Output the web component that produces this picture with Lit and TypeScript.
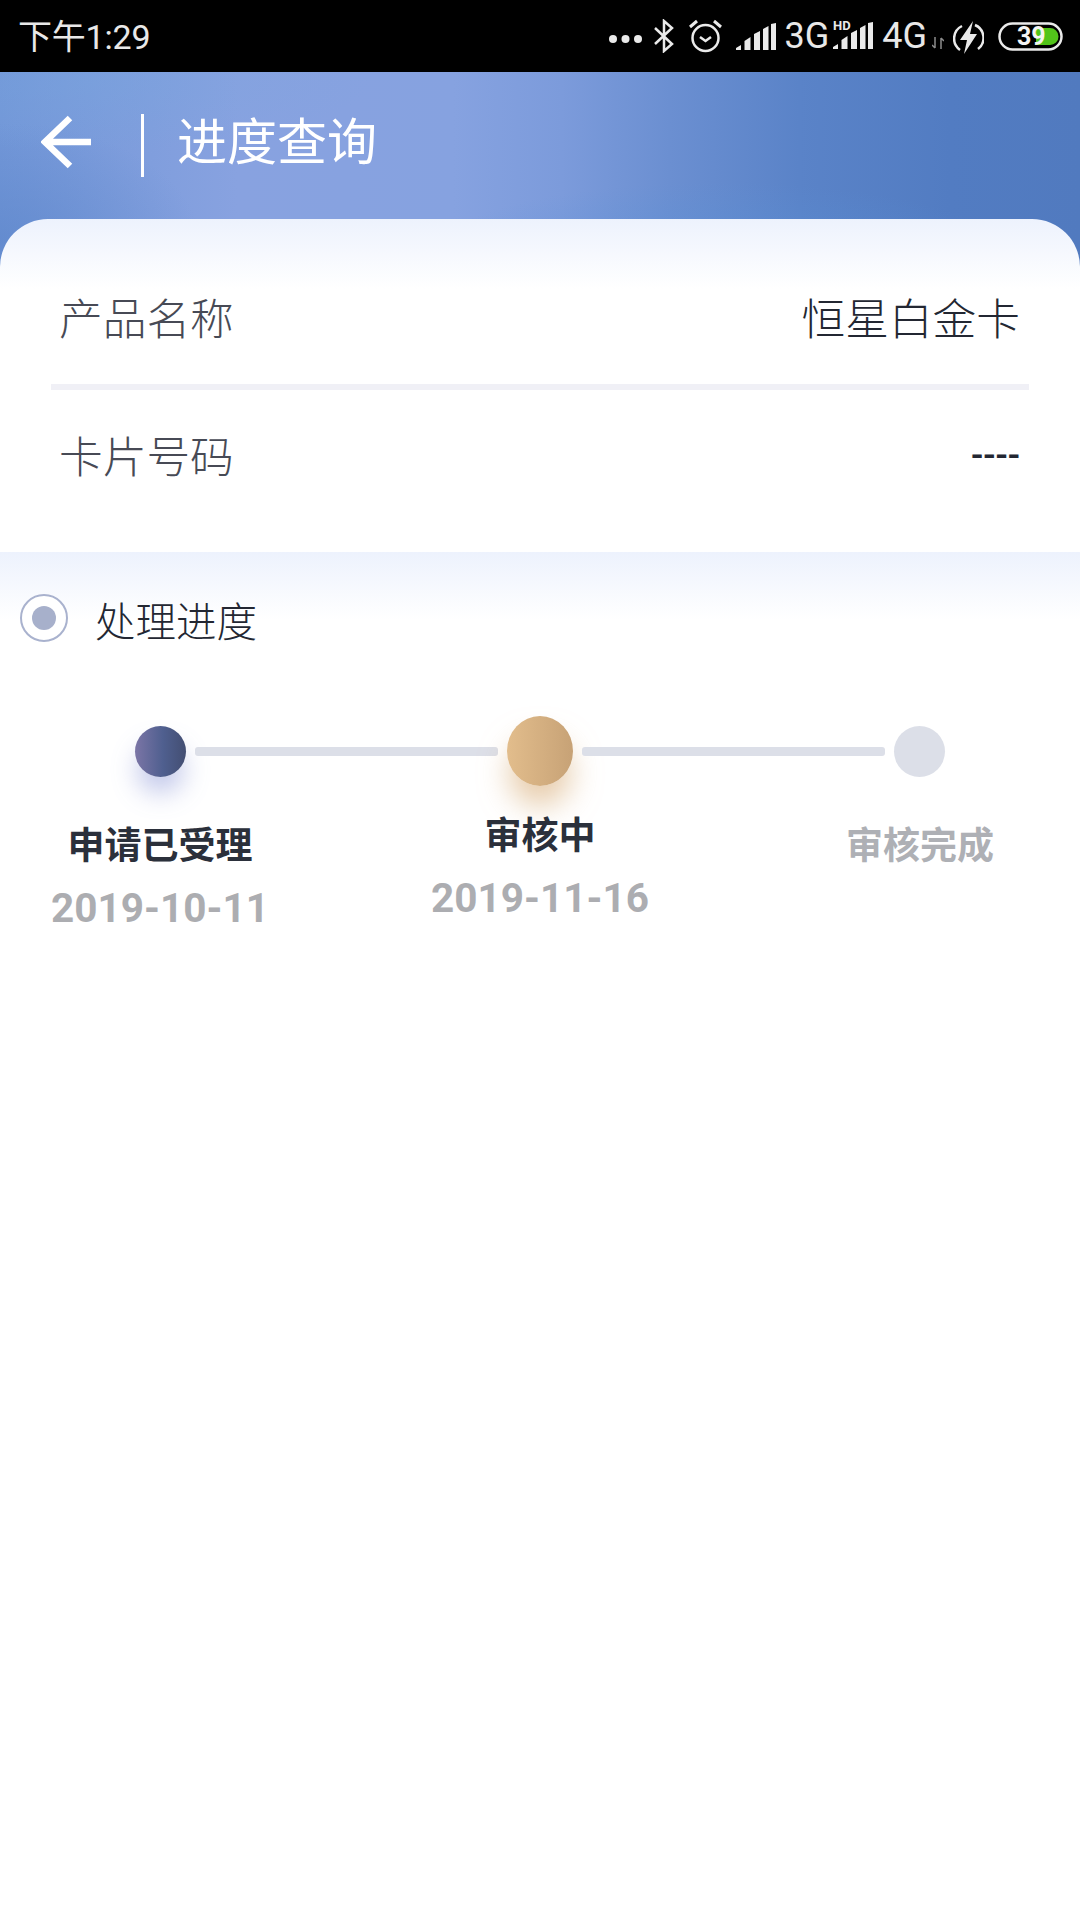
import { LitElement, html, css, svg } from "lit";
import { customElement } from "lit/decorators.js";

const bars = () => svg`
  <path d="M0 27h5v-5l-5 3z M8.500 27h6V14l-6 4z M18 27h6V8l-6 3z M27 27h5.500V3L27 6z M35 27h5V0l-5 1z" fill="#eaeaea"/>`;

@customElement("app-root")
export class AppRoot extends LitElement {
  static styles = css`
    :host {
      display: block;
      width: 1080px;
      height: 1920px;
      background: #fff;
      overflow: hidden;
      font-family: "Noto Sans CJK SC", "Noto Sans", sans-serif;
    }
    .status {
      height: 72px;
      background: #000;
      display: flex;
      align-items: center;
      color: #e8e8e8;
      font-family: Roboto, "Noto Sans CJK SC", sans-serif;
      padding: 0 17px 0 18px;
      box-sizing: border-box;
    }
    .time { font-size: 34px; line-height: 70px; flex: 1; padding-top: 2px; letter-spacing: -0.2px; }
    .icons { display: flex; align-items: center; height: 72px; }
    .net { font-size: 36px; line-height: 72px; }
    .dots { margin-right: 12px; margin-top: 6px; }
    .bt { margin-right: 15px; }
    .alarm { margin-right: 14px; }
    .sig1 { margin-right: 8px; }
    .sig2 { margin: -4px 9px 0 4px; }
    .arrows { margin: 14px 9px 0 5px; }
    .bolt { margin-right: 14px; margin-top: 2px; }
    .header {
      height: 195px;
      padding-bottom: 48px;
      box-sizing: border-box;
      display: flex;
      align-items: center;
      padding-left: 41px;
      background:
        radial-gradient(ellipse 280px 70px at 90px 10px, rgba(120, 165, 222, 0.4), transparent),
        radial-gradient(ellipse 200px 120px at 0px 170px, rgba(88, 130, 200, 0.55), transparent),
        radial-gradient(ellipse 300px 80px at 720px 190px, rgba(90, 145, 215, 0.5), transparent),
        linear-gradient(90deg, #7297d8 0%, #88a2e0 22%, #86a2e0 42%, #7c9bdb 52%, #6b8fd1 62%, #5a83c8 74%, #527cc2 88%, #517abf 100%);
      color: #fff;
    }
    .back { display: block; margin-right: 50px; margin-top: -8px; }
    .sep { width: 3px; height: 63px; background: #fff; margin-right: 33px; }
    .title { font-size: 50px; line-height: 70px; font-weight: 400; padding-bottom: 16px; }
    .card {
      position: relative;
      margin-top: -48px;
      border-radius: 48px 48px 0 0;
      background: linear-gradient(180deg, #edf2fd 0, #fff 70px);
      padding: 69px 0 66px;
    }
    .row {
      display: flex;
      justify-content: space-between;
      align-items: center;
      height: 60px;
      font-size: 43.7px;
      padding: 0 60px 0 59px;
      font-weight: 300;
    }
    .row span { padding-bottom: 5px; }
    .row .k { color: #474a55; }
    .row .v { color: #232732; }
    .row .dash { font-family: Roboto, sans-serif; font-weight: 500; font-size: 36px; padding-bottom: 0; }
    .rule { height: 6px; background: #f0f0f6; margin: 36px 51px 36px 51px; }
    .progress {
      background: linear-gradient(180deg, #edf2fd 0, #fff 68px);
      padding-top: 42px;
    }
    .head { display: flex; align-items: center; height: 48px; padding-left: 20px; }
    .radio {
      width: 48px;
      height: 48px;
      box-sizing: border-box;
      border: 2px solid #a9b2ce;
      border-radius: 50%;
      display: flex;
      align-items: center;
      justify-content: center;
      margin-right: 27px;
      background: #fff;
    }
    .radio i { display: block; width: 24px; height: 24px; border-radius: 50%; background: #a7b0cb; }
    .head span { font-size: 40.5px; line-height: 48px; color: #232732; font-weight: 300; padding-top: 4px; }
    .track {
      display: flex;
      align-items: center;
      justify-content: center;
      gap: 9px;
      margin-top: 74px;
      height: 70px;
    }
    .node { width: 51px; height: 51px; border-radius: 50%; flex: none; }
    .node.done {
      background: linear-gradient(90deg, #7b75a6, #4f5f8f 55%, #434e72);
      box-shadow: 0 18px 26px -2px rgba(110, 125, 205, 0.42);
    }
    .node.now {
      width: 66px;
      height: 70px;
      background: linear-gradient(90deg, #e2bd8c, #c7a276);
      box-shadow: 0 22px 30px -2px rgba(215, 170, 115, 0.6);
    }
    .node.todo { background: #dcdfe8; }
    .line { width: 303px; height: 9px; border-radius: 3px; background: #dcdfe8; flex: none; }
    .steps {
      display: grid;
      grid-template-columns: repeat(3, 320px);
      column-gap: 60px;
      align-items: start;
    }
    .step { text-align: center; margin-top: 32px; }
    .step.now { margin-top: 22px; }
    .name { font-size: 37px; line-height: 50px; font-weight: 700; color: #2b303b; }
    .step.todo .name { color: #aeb0b5; }
    .date {
      font-family: Roboto, sans-serif;
      font-weight: 700;
      font-size: 40.5px;
      line-height: 50px;
      margin-top: 15px;
      color: #acadb1;
    }
  `;

  render() {
    return html`
      <div class="status">
        <div class="time">下午1:29</div>
        <div class="icons">
          <svg class="dots" width="33" height="10" viewBox="0 0 33 10"><circle cx="4" cy="5" r="4" fill="#eaeaea"/><circle cx="16.500" cy="5" r="4" fill="#eaeaea"/><circle cx="29" cy="5" r="4" fill="#eaeaea"/></svg>
          <svg class="bt" width="20" height="34" viewBox="0 0 20 34" fill="none" stroke="#eaeaea" stroke-width="2.500"><path d="M1 9l17 16-8 7V2l8 7L1 25"/></svg>
          <svg class="alarm" width="33" height="34" viewBox="0 0 33 34" fill="none" stroke="#eaeaea" stroke-width="2.500"><circle cx="16.500" cy="19" r="13"/><path d="M11 18l5.500 4 5.500-4"/><path d="M1 8l7-6M32 8l-7-6" stroke-width="3"/></svg>
          <svg class="sig1" width="40" height="27" viewBox="0 0 40 27">${bars()}</svg>
          <span class="net">3G</span>
          <svg class="sig2" width="40" height="32" viewBox="0 0 40 32"><text x="0" y="12" font-family="Roboto, sans-serif" font-size="13" font-weight="700" fill="#eaeaea">HD</text><g transform="translate(0 4)">${bars()}</g></svg>
          <span class="net">4G</span>
          <svg class="arrows" width="12" height="12" viewBox="0 0 12 12" fill="none" stroke="#8c8c8c" stroke-width="1.500"><path d="M3 0v11M0 8l3 3M9 12V1M12 4L9 1"/></svg>
          <svg class="bolt" width="31" height="33" viewBox="0 0 31 33" fill="none"><path d="M9 5a14 14 0 0 0-2 24M22 4a14 14 0 0 1 3 24" stroke="#eaeaea" stroke-width="2.500"/><path d="M20 0L7 19h7l-3 14 13-20h-7z" fill="#eaeaea"/></svg>
          <svg width="65" height="29" viewBox="0 0 65 29"><rect x="1.500" y="1.500" width="62" height="26" rx="13" fill="none" stroke="#eaeaea" stroke-width="2.500"/><path d="M38 6h14a8.500 8.500 0 0 1 0 17H38z" fill="#52c41a"/><text x="19" y="23" font-family="Roboto, sans-serif" font-size="25" font-weight="700" fill="#f4f4f4">39</text></svg>
        </div>
      </div>
      <div class="header">
        <svg class="back" width="50" height="54" viewBox="0 0 50 54" fill="none" stroke="#fff" stroke-width="6.500"><path d="M29 3L4 27l25 24M4 27h46"/></svg>
        <div class="sep"></div>
        <div class="title">进度查询</div>
      </div>
      <div class="card">
        <div class="row"><span class="k">产品名称</span><span class="v">恒星白金卡</span></div>
        <div class="rule"></div>
        <div class="row"><span class="k">卡片号码</span><span class="v dash">----</span></div>
      </div>
      <div class="progress">
        <div class="head"><div class="radio"><i></i></div><span>处理进度</span></div>
        <div class="track">
          <div class="node done"></div><div class="line"></div>
          <div class="node now"></div><div class="line"></div>
          <div class="node todo"></div>
        </div>
        <div class="steps">
          <div class="step"><div class="name">申请已受理</div><div class="date">2019-10-11</div></div>
          <div class="step now"><div class="name">审核中</div><div class="date">2019-11-16</div></div>
          <div class="step todo"><div class="name">审核完成</div></div>
        </div>
      </div>
    `;
  }
}
